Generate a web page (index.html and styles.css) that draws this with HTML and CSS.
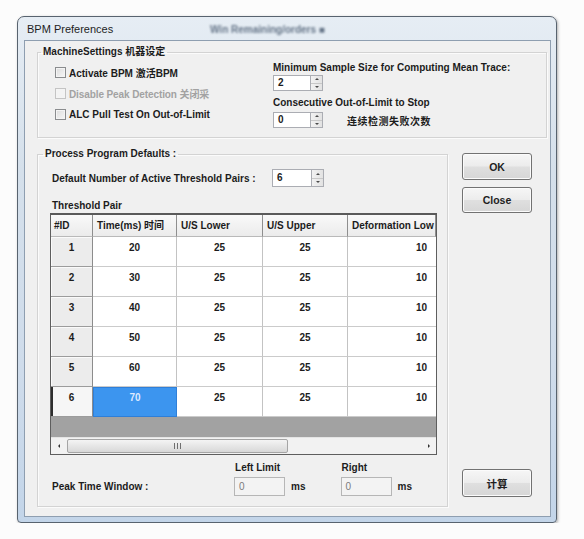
FILE: index.html
```html
<!DOCTYPE html>
<html>
<head>
<meta charset="utf-8">
<title>BPM Preferences</title>
<link rel="stylesheet" href="styles.css">
</head>
<body>
<div class="window">
  <div class="titlebar">BPM Preferences<span class="ghost">Win Remaining/orders ■</span></div>
  <div class="client">
    <fieldset class="group group-machine">
      <legend>MachineSettings 机器设定</legend>
      <div class="machine-body">
        <div class="checks">
          <div class="check-row"><span class="checkbox"></span><span>Activate BPM 激活BPM</span></div>
          <div class="check-row disabled"><span class="checkbox"></span><span>Disable Peak Detection 关闭采</span></div>
          <div class="check-row"><span class="checkbox"></span><span>ALC Pull Test On Out-of-Limit</span></div>
        </div>
        <div class="samples">
          <div class="lbl">Minimum Sample Size for Computing Mean Trace:</div>
          <div class="spin spin-a">
            <span class="spin-field">2</span>
            <span class="spin-btns"><span class="up"></span><span class="down"></span></span>
          </div>
          <div class="lbl lbl-gap">Consecutive Out-of-Limit to Stop</div>
          <div class="spin-row">
            <div class="spin spin-b">
              <span class="spin-field">0</span>
              <span class="spin-btns"><span class="up"></span><span class="down"></span></span>
            </div>
            <span class="cn-note">连续检测失败次数</span>
          </div>
        </div>
      </div>
    </fieldset>

    <div class="lower">
      <fieldset class="group group-process">
        <legend>Process Program Defaults :</legend>
        <div class="pairs-row">
          <span class="pairs-label">Default Number of Active Threshold Pairs :</span>
          <div class="spin spin-c">
            <span class="spin-field">6</span>
            <span class="spin-btns"><span class="up"></span><span class="down"></span></span>
          </div>
        </div>
        <div class="tp-label">Threshold Pair</div>
        <div class="table">
          <div class="grid">
            <div class="th">#ID</div>
            <div class="th">Time(ms) 时间</div>
            <div class="th">U/S Lower</div>
            <div class="th">U/S Upper</div>
            <div class="th">Deformation Low</div>

            <div class="rh">1</div><div class="td c">20</div><div class="td c">25</div><div class="td c">25</div><div class="td r">10</div>
            <div class="rh">2</div><div class="td c">30</div><div class="td c">25</div><div class="td c">25</div><div class="td r">10</div>
            <div class="rh">3</div><div class="td c">40</div><div class="td c">25</div><div class="td c">25</div><div class="td r">10</div>
            <div class="rh">4</div><div class="td c">50</div><div class="td c">25</div><div class="td c">25</div><div class="td r">10</div>
            <div class="rh">5</div><div class="td c">60</div><div class="td c">25</div><div class="td c">25</div><div class="td r">10</div>
            <div class="rh current">6</div><div class="td c selected">70</div><div class="td c">25</div><div class="td c">25</div><div class="td r">10</div>
          </div>
          <div class="filler"></div>
          <div class="hscroll">
            <span class="arrow-btn"><span class="tri-left"></span></span>
            <span class="track"><span class="thumb"><span class="grip"></span></span></span>
            <span class="arrow-btn"><span class="tri-right"></span></span>
          </div>
        </div>
        <div class="peak-row">
          <span class="peak-label">Peak Time Window :</span>
          <div class="limit">
            <div class="limit-title">Left Limit</div>
            <div class="limit-input"><span class="tf">0</span><span class="unit">ms</span></div>
          </div>
          <div class="limit">
            <div class="limit-title">Right</div>
            <div class="limit-input"><span class="tf">0</span><span class="unit">ms</span></div>
          </div>
        </div>
      </fieldset>
      <div class="buttons">
        <button class="btn btn-ok">OK</button>
        <button class="btn btn-close">Close</button>
        <button class="btn btn-calc">计算</button>
      </div>
    </div>
  </div>
</div>
</body>
</html>
```

FILE: styles.css
```css
* { box-sizing: border-box; }

body {
  margin: 0;
  background: #fcfcfc;
  font-family: "Liberation Sans", "Noto Sans CJK SC", sans-serif;
  font-size: 10px;
  font-weight: bold;
  color: #1c1c1c;
}

.window {
  position: relative;
  margin: 16px 0 0 17px;
  width: 540px;
  height: 507px;
  border: 1px solid #58636f;
  border-radius: 7px 7px 4px 4px;
  background: linear-gradient(#e6edf4, #d5e0eb 30%, #cfdceb 70%, #c3d5e9);
  display: flex;
  flex-direction: column;
  box-shadow: 1px 1px 3px rgba(0, 0, 0, 0.3);
}

.titlebar {
  position: relative;
  height: 23px;
  padding-left: 9px;
  font-family: "Liberation Sans", sans-serif;
  font-weight: normal;
  font-size: 11px;
  line-height: 24px;
  color: #1e1e1e;
}

.ghost {
  position: absolute;
  left: 192px;
  top: 1px;
  font-size: 10px;
  font-weight: bold;
  color: #4e5f74;
  filter: blur(1.3px);
  opacity: 0.85;
}

.client {
  flex: 1;
  margin: 0 5px 5px 6px;
  border: 1px solid #8e9eb0;
  background: #f0f0f0;
  display: flex;
  flex-direction: column;
}

.group {
  margin: 0;
  padding: 0;
  min-width: 0;
  border: 1px solid #d3d3d3;
  box-shadow: inset 1px 1px 0 #fbfbfb, 1px 1px 0 #fbfbfb;
}

.group legend {
  padding: 0 2px;
  line-height: 12px;
  font-size: 10px;
  color: #1c1c1c;
}

.group-machine {
  margin: 5px 3px 0 12px;
  padding: 4px 0 9px 0;
}

.group-machine legend { margin-left: 3px; }

.machine-body {
  display: flex;
}

.checks {
  width: 218px;
  margin-left: 17px;
  flex: none;
}

.check-row {
  height: 21px;
  display: flex;
  align-items: center;
  white-space: nowrap;
}

.checkbox {
  width: 11px;
  height: 11px;
  margin-right: 3px;
  border: 1px solid #8a8c8e;
  background: linear-gradient(135deg, #dcdcdc, #f7f7f7);
  box-shadow: inset 0 0 0 1px #f4f4f4;
  flex: none;
}

.check-row.disabled { color: #a2a2a2; letter-spacing: -0.1px; }
.check-row.disabled .checkbox { border-color: #c4c4c4; background: #f3f3f3; }

.samples {
  display: flex;
  flex-direction: column;
  align-items: flex-start;
}

.lbl {
  line-height: 12px;
  white-space: nowrap;
}

.lbl-gap { margin-top: 6px; }

.spin {
  display: flex;
  height: 16px;
  width: 50px;
}

.spin-a { margin-top: 1px; }

.spin-row {
  margin-top: 3px;
  display: flex;
  align-items: center;
}

.cn-note { margin-left: 24px; letter-spacing: 0.5px; }

.spin-field {
  flex: 1;
  background: #fff;
  border: 1px solid #abadb3;
  border-right: none;
  padding-left: 4px;
  line-height: 14px;
}

.spin-btns {
  width: 13px;
  flex: none;
  display: flex;
  flex-direction: column;
  border: 1px solid #abadb3;
  background: linear-gradient(90deg, #f2f2f2, #e2e2e2);
}

.spin-btns span {
  flex: 1;
  display: flex;
  align-items: center;
  justify-content: center;
}

.spin-btns .up { border-bottom: 1px solid #c8c8c8; }

.spin-btns .up::before {
  content: "";
  border-left: 2px solid transparent;
  border-right: 2px solid transparent;
  border-bottom: 2px solid #4a4a4a;
}

.spin-btns .down::before {
  content: "";
  border-left: 2px solid transparent;
  border-right: 2px solid transparent;
  border-top: 2px solid #4a4a4a;
}

.lower {
  display: flex;
  margin: 10px 0 0 12px;
}

.group-process {
  width: 411px;
  padding: 0 0 10px 0;
}

.group-process legend { margin-left: 5px; }

.pairs-row {
  margin: 9px 0 0 14px;
  height: 18px;
  display: flex;
  align-items: center;
}

.pairs-label { width: 220px; }

.spin-c { width: 52px; height: 18px; }
.spin-c .spin-field { line-height: 16px; }

.tp-label {
  margin: 13px 0 0 14px;
  line-height: 12px;
}

.table {
  margin: 1px 0 0 12px;
  width: 387px;
  height: 242px;
  border: 1px solid #5e5e5e;
  border-top: 2px solid #5a5a5a;
  display: flex;
  flex-direction: column;
  background: #fff;
}

.grid {
  display: grid;
  grid-template-columns: 42px 84px 86px 85px 88px;
  grid-template-rows: 22px repeat(6, 30px);
}

.th {
  background: linear-gradient(#f9f9f9, #ebebeb);
  border-right: 1px solid #8e8e8e;
  border-bottom: 1px solid #b9b9b9;
  line-height: 21px;
  padding-left: 4px;
  white-space: nowrap;
  overflow: hidden;
}

.th:first-child { padding-left: 3px; }
.th:last-child { border-right: none; }

.rh {
  background: #ececec;
  border-right: 1px solid #8c8c8c;
  border-bottom: 1px solid #9c9c9c;
  box-shadow: inset 1px 1px 0 #fafafa;
  text-align: center;
  padding-top: 5px;
  line-height: 12px;
}

.rh.current {
  background: #f6f6f6;
  box-shadow: inset 2px 0 0 #2e2e2e;
}

.td {
  border-right: 1px solid #c3c3c3;
  border-bottom: 1px solid #cbcbcb;
  padding-top: 5px;
  line-height: 12px;
}

.td.c { text-align: center; }
.td.r { text-align: right; padding-right: 9px; border-right: none; }

.td.selected {
  background: #3c95ef;
  color: #dceaff;
  border: 1px solid #2f7fd8;
  padding-top: 4px;
}

.filler {
  height: 20px;
  background: #a2a2a2;
}

.hscroll {
  flex: 1;
  display: flex;
  background: #f2f2f2;
  border-top: 1px solid #e4e4e4;
}

.arrow-btn {
  width: 15px;
  flex: none;
  display: flex;
  align-items: center;
  justify-content: center;
}

.tri-left {
  border-top: 2px solid transparent;
  border-bottom: 2px solid transparent;
  border-right: 2px solid #333;
}

.tri-right {
  border-top: 2px solid transparent;
  border-bottom: 2px solid transparent;
  border-left: 2px solid #333;
}

.track {
  flex: 1;
  display: flex;
  padding: 1px 0 1px 1px;
}

.thumb {
  width: 221px;
  border: 1px solid #a5a5a5;
  border-radius: 2px;
  background: linear-gradient(#f4f4f4, #e6e6e6 50%, #d8d8d8);
  display: flex;
  align-items: center;
  justify-content: center;
}

.grip {
  width: 7px;
  height: 6px;
  background: repeating-linear-gradient(90deg, #6f6f6f 0 1px, transparent 1px 3px);
}

.peak-row {
  margin: 7px 0 0 14px;
  display: flex;
  align-items: flex-end;
}

.peak-label {
  width: 183px;
  line-height: 19px;
}

.limit { width: 107px; }

.limit-title { line-height: 12px; padding-left: 1px; }

.limit-input {
  margin-top: 3px;
  display: flex;
  align-items: center;
}

.tf {
  width: 51px;
  height: 19px;
  border: 1px solid #b6b6b6;
  background: #f3f3f3;
  color: #7c7c7c;
  font-weight: normal;
  padding-left: 4px;
  line-height: 17px;
}

.unit { margin-left: 6px; }

.buttons {
  width: 70px;
  margin-left: 14px;
  display: flex;
  flex-direction: column;
  padding: 5px 0 10px 0;
}

.btn {
  font-family: "Liberation Sans", "Noto Sans CJK SC", sans-serif;
  font-size: 10.5px;
  font-weight: bold;
  color: #1e1e1e;
  border: 1px solid #727272;
  border-radius: 3px;
  background: linear-gradient(#f6f6f6, #ececec 48%, #dfdfdf 52%, #d6d6d6);
  box-shadow: inset 0 0 0 1px #fbfbfb;
  padding: 0;
  width: 70px;
}

.btn-ok { height: 27px; }
.btn-close { height: 26px; margin-top: 7px; }
.btn-calc { height: 28px; margin-top: auto; }
```
